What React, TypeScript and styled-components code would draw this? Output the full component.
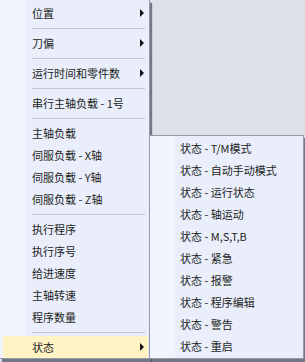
import React from "react";
import styled, { createGlobalStyle } from "styled-components";

const Global = createGlobalStyle`
  html, body { margin: 0; padding: 0; background: #dde1ea; }
  body {
    width: 305px;
    height: 362px;
    overflow: hidden;
    font-family: "Noto Sans CJK SC", "Microsoft YaHei", "Noto Sans", sans-serif;
  }
`;

const Desktop = styled.div`
  width: 305px;
  height: 362px;
  box-sizing: border-box;
  padding-bottom: 3px;
  display: flex;
  align-items: flex-end;
  background: #dde1ea;
  overflow: hidden;
`;

const Menu = styled.div<{ $width: number; $gutter: number; $framed?: boolean }>`
  position: relative;
  box-sizing: border-box;
  width: ${(p) => p.$width}px;
  flex: none;
  display: flex;
  flex-direction: column;
  background: linear-gradient(
    to right,
    #f1f4fc 0,
    #f1f4fc ${(p) => p.$gutter}px,
    #e9eefa ${(p) => p.$gutter}px
  );
  border-right: 1px solid #939bab;
  border-bottom: 1px solid #939bab;
  border-top: ${(p) => (p.$framed ? "1px solid #939bab" : "none")};
  border-left: ${(p) => (p.$framed ? "1px solid #939bab" : "none")};
  padding: ${(p) => (p.$framed ? "1px 0" : "2px 0 0 0")};
  margin-left: ${(p) => (p.$framed ? "-1px" : "0")};
  box-shadow: 2px 3px 1px rgba(70, 76, 92, 0.7);
`;

const Item = styled.div<{ $indent: number; $active?: boolean }>`
  height: 22px;
  box-sizing: border-box;
  display: flex;
  align-items: center;
  margin: 0 1px 0 3px;
  padding-left: ${(p) => p.$indent}px;
  padding-right: 4px;
  background: ${(p) => (p.$active ? "#fff3c4" : "transparent")};
  font-size: 11px;
  line-height: 22px;
  color: #1d1f24;
  white-space: nowrap;
`;

const Label = styled.span`
  flex: 1;
`;

const Arrow = styled.span`
  width: 0;
  height: 0;
  border-left: 4px solid #111318;
  border-top: 4px solid transparent;
  border-bottom: 4px solid transparent;
`;

const Separator = styled.div`
  height: 8px;
  margin: 0 4px 0 32px;
  display: flex;
  align-items: center;
  &::before {
    content: "";
    flex: 1;
    height: 1px;
    background: #c4c8d1;
  }
`;

type Entry = { label: string; arrow?: boolean; active?: boolean } | "sep";

const mainEntries: Entry[] = [
  { label: "位置", arrow: true },
  "sep",
  { label: "刀偏", arrow: true },
  "sep",
  { label: "运行时间和零件数", arrow: true },
  "sep",
  { label: "串行主轴负载 - 1号" },
  "sep",
  { label: "主轴负载" },
  { label: "伺服负载 - X轴" },
  { label: "伺服负载 - Y轴" },
  { label: "伺服负载 - Z轴" },
  "sep",
  { label: "执行程序" },
  { label: "执行序号" },
  { label: "给进速度" },
  { label: "主轴转速" },
  { label: "程序数量" },
  "sep",
  { label: "状态", arrow: true, active: true },
];

const subEntries: string[] = [
  "状态 - T/M模式",
  "状态 - 自动手动模式",
  "状态 - 运行状态",
  "状态 - 轴运动",
  "状态 - M,S,T,B",
  "状态 - 紧急",
  "状态 - 报警",
  "状态 - 程序编辑",
  "状态 - 警告",
  "状态 - 重启",
];

export default function App() {
  return (
    <>
      <Global />
      <Desktop>
        <Menu $width={150} $gutter={26}>
          {mainEntries.map((e, i) =>
            e === "sep" ? (
              <Separator key={i} />
            ) : (
              <Item key={i} $indent={29} $active={e.active}>
                <Label>{e.label}</Label>
                {e.arrow && <Arrow />}
              </Item>
            )
          )}
        </Menu>
        <Menu $width={155} $gutter={25} $framed>
          {subEntries.map((s) => (
            <Item key={s} $indent={27}>
              <Label>{s}</Label>
            </Item>
          ))}
        </Menu>
      </Desktop>
    </>
  );
}
